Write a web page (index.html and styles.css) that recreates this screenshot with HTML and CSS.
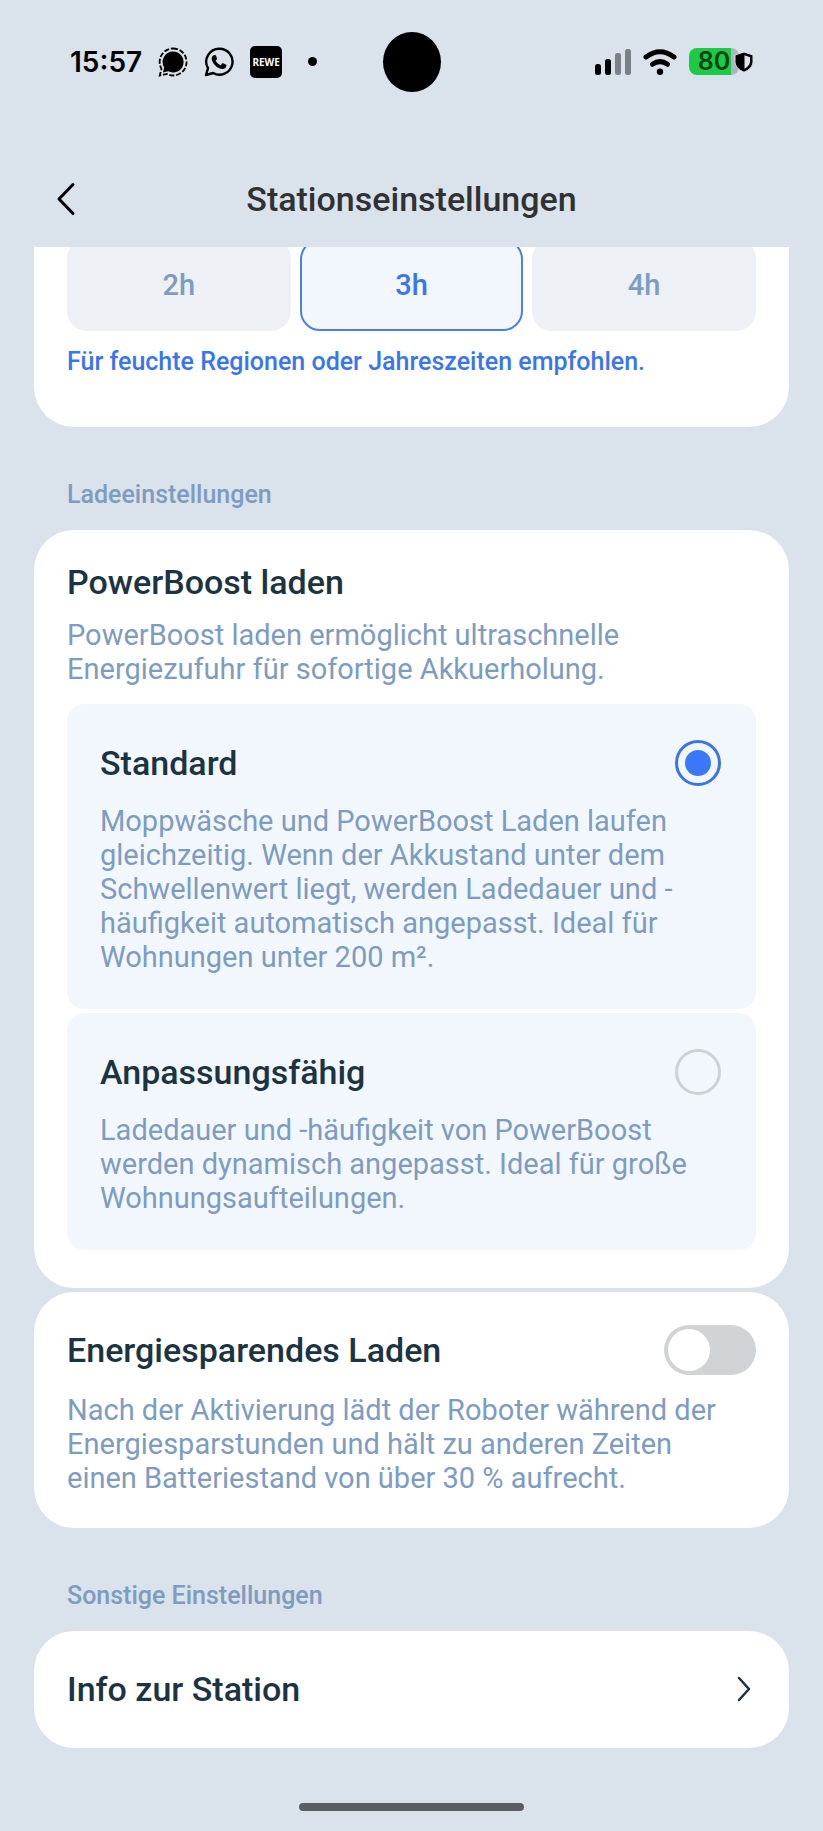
FILE: index.html
```html
<!DOCTYPE html>
<html lang="de">
<head>
    <meta charset="UTF-8">
    <meta name="viewport" content="width=device-width, initial-scale=1.0">
    <title>Stationseinstellungen</title>
    <link rel="stylesheet" href="styles.css">
</head>
<body>
    <div class="statusbar">
        <div class="status-left">
            <span class="clock">15:57</span>
            <svg class="icon-signal" width="30" height="30" viewBox="0 0 30 30">
                <path d="M15 4.500a10.500 10.500 0 1 1-4.800 19.800L5 25.500l1.200-5A10.500 10.500 0 0 1 15 4.500z" fill="#000"/>
                <path d="M15 1.500a13.500 13.500 0 1 1-6.300 25.400L1.800 28.500l1.700-6.600A13.500 13.500 0 0 1 15 1.500z" fill="none" stroke="#000" stroke-width="1.800" stroke-dasharray="5 1.800"/>
            </svg>
            <svg class="icon-whatsapp" width="30" height="30" viewBox="0 0 30 30">
                <path d="M15.500 1.700a13 13 0 1 1-6.400 24.300L2 28l2-6.800A13 13 0 0 1 15.500 1.700z" fill="none" stroke="#000" stroke-width="2.400" stroke-linejoin="round"/>
                <path d="M11 8c.6 0 .8.200 1 .7l1 2.500c.2.500 0 .9-.3 1.300l-1 1.200c1.200 2.200 2.800 3.600 5 4.500l1.300-1.600c.3-.4.700-.5 1.200-.3l2.700 1.300c.5.200.7.500.6 1-.2 2-1.700 3.400-3.900 3.400-5.200-.3-10.600-5.500-10.900-10.300C7.700 9.700 9 8 11 8z" fill="#000"/>
            </svg>
            <span class="icon-rewe">REWE</span>
            <span class="more-dot"></span>
        </div>
        <div class="camera"></div>
        <div class="status-right">
            <svg width="36" height="26" viewBox="0 0 36 26">
                <rect x="0" y="15" width="6" height="11" rx="2.500" fill="#000"/>
                <rect x="10" y="10" width="6" height="16" rx="2.500" fill="#000"/>
                <rect x="20" y="4" width="6" height="22" rx="2.500" fill="#7c7f86"/>
                <rect x="30" y="0" width="6" height="26" rx="2.500" fill="#7c7f86"/>
            </svg>
            <svg class="icon-wifi" width="34" height="26" viewBox="0 0 34 26">
                <path d="M3 8Q17-2.500 31 8" fill="none" stroke="#000" stroke-width="5" stroke-linecap="round"/>
                <path d="M9.500 15.300Q17 10 24.500 15.300" fill="none" stroke="#000" stroke-width="5" stroke-linecap="round"/>
                <circle cx="17" cy="22.800" r="3.200" fill="#000"/>
            </svg>
            <div class="battery">
                <span class="battery-level">80</span>
                <svg class="icon-shield" width="20" height="22" viewBox="0 0 20 22">
                    <path d="M10 1L19 4V10.500c0 4.700-3.700 8.600-9 10.700C4.700 19.100 1 15.200 1 10.500V4z" fill="#000" stroke="#dae2eb" stroke-width="1"/>
                    <path d="M10.500 4.300L16 6.200V10.500c0 3-2.200 5.600-5.500 7.200z" fill="#dae2eb"/>
                </svg>
            </div>
        </div>
    </div>

    <header class="header">
        <button class="back" type="button" aria-label="Zurück">
            <svg width="20" height="34" viewBox="0 0 20 34">
                <path d="M17 2.500L3 17l14 14.500" fill="none" stroke="#000" stroke-width="3" stroke-linecap="round" stroke-linejoin="round"/>
            </svg>
        </button>
        <h1>Stationseinstellungen</h1>
    </header>

    <main class="content">
        <section class="card card-drying">
            <div class="durations">
                <button class="duration" type="button">2h</button>
                <button class="duration active" type="button">3h</button>
                <button class="duration" type="button">4h</button>
            </div>
            <p class="hint">Für feuchte Regionen oder Jahreszeiten empfohlen.</p>
        </section>

        <h2 class="section-label">Ladeeinstellungen</h2>

        <section class="card card-boost">
            <h3 class="title">PowerBoost laden</h3>
            <p class="desc">PowerBoost laden ermöglicht ultraschnelle Energiezufuhr für sofortige Akkuerholung.</p>
            <div class="options">
                <div class="option">
                    <div class="row">
                        <label class="title" for="boost-standard">Standard</label>
                        <input class="radio" type="radio" name="boost" id="boost-standard" checked>
                    </div>
                    <p class="desc">Moppwäsche und PowerBoost Laden laufen gleichzeitig. Wenn der Akkustand unter dem Schwellenwert liegt, werden Ladedauer und -häufigkeit automatisch angepasst. Ideal für Wohnungen unter 200 m².</p>
                </div>
                <div class="option">
                    <div class="row">
                        <label class="title" for="boost-adaptive">Anpassungsfähig</label>
                        <input class="radio" type="radio" name="boost" id="boost-adaptive">
                    </div>
                    <p class="desc">Ladedauer und -häufigkeit von PowerBoost werden dynamisch angepasst. Ideal für große Wohnungsaufteilungen.</p>
                </div>
            </div>
        </section>

        <section class="card card-saving">
            <div class="row">
                <label class="title" for="saving">Energiesparendes Laden</label>
                <input class="toggle" type="checkbox" id="saving">
            </div>
            <p class="desc">Nach der Aktivierung lädt der Roboter während der Energiesparstunden und hält zu anderen Zeiten einen Batteriestand von über 30 % aufrecht.</p>
        </section>

        <h2 class="section-label">Sonstige Einstellungen</h2>

        <a class="card card-link" href="#">
            <span class="title">Info zur Station</span>
            <svg width="16" height="26" viewBox="0 0 16 26">
                <path d="M3 2l10 11L3 24" fill="none" stroke="#1c3342" stroke-width="2.500" stroke-linecap="round" stroke-linejoin="round"/>
            </svg>
        </a>
    </main>

    <div class="home-bar"></div>
</body>
</html>
```

FILE: styles.css
```css
* {
    box-sizing: border-box;
}

body {
    margin: 0;
    background: #dae2eb;
    color: #1c3342;
    font-family: Roboto, "Liberation Sans", sans-serif;
}

h1,
h2,
h3,
p {
    margin: 0;
}

button {
    padding: 0;
    border: 0;
    background: none;
    font-family: inherit;
}

svg {
    display: block;
    flex: none;
}

/* Status bar */
.statusbar {
    display: grid;
    grid-template-columns: 1fr auto 1fr;
    align-items: center;
    height: 150px;
    padding: 0 70px 27px;
    color: #000;
}

.status-left,
.status-right {
    display: flex;
    align-items: center;
}

.status-right {
    justify-content: flex-end;
}

.clock {
    font: 600 28px/34px Inter, sans-serif;
}

.icon-signal,
.icon-whatsapp {
    margin-left: 16px;
}

.icon-rewe {
    width: 32px;
    margin-left: 16px;
    border-radius: 5px;
    background: #000;
    color: #fff;
    font: 700 10px/32px "Noto Sans", sans-serif;
    text-align: center;
}

.more-dot {
    width: 9px;
    height: 9px;
    margin-left: 26px;
    border-radius: 50%;
    background: #000;
}

.camera {
    width: 58px;
    height: 60px;
    border-radius: 50%;
    background: #000;
}

.icon-wifi {
    margin-left: 12px;
}

.battery {
    position: relative;
    width: 64px;
    margin-left: 12px;
}

.battery-level {
    display: block;
    width: 50px;
    border-radius: 8px;
    background: linear-gradient(to right, #1bcb46 42px, #b0b5bd 42px);
    color: #04420f;
    font: 600 25px/27px Inter, sans-serif;
    text-align: center;
}

.icon-shield {
    position: absolute;
    top: 3px;
    right: -1px;
}

/* Header */
.header {
    display: grid;
    grid-template-columns: 40px 1fr 40px;
    align-items: center;
    height: 97px;
    padding: 0 46px;
}

.back {
    display: flex;
    justify-content: center;
}

.header h1 {
    color: #303133;
    font-size: 34px;
    font-weight: 500;
    line-height: 40px;
    text-align: center;
}

/* Settings list */
.content {
    overflow: hidden;
    padding: 0 34px;
}

.card {
    padding: 32px 33px;
    border-radius: 40px;
    background: #fff;
}

.section-label {
    margin: 53px 33px 20px;
    color: #7d9cc0;
    font-size: 25px;
    font-weight: 500;
    line-height: 30px;
}

.title {
    font-size: 34px;
    font-weight: 500;
    line-height: 40px;
}

.desc {
    margin-top: 16px;
    color: #7d9cc0;
    font-size: 29px;
    line-height: 34px;
}

.row {
    display: flex;
    align-items: center;
    justify-content: space-between;
}

.row + .desc {
    margin-top: 18px;
}

/* Partly scrolled under the header */
.card-drying {
    margin-top: -40px;
    padding-bottom: 50px;
}

.durations {
    display: grid;
    grid-template-columns: repeat(3, 1fr);
    gap: 9px;
}

.duration {
    height: 92px;
    border-radius: 20px;
    background: #edf0f5;
    color: #7d9cc0;
    font-size: 29px;
    font-weight: 500;
}

.duration.active {
    border: 2px solid #4a7fe4;
    background: #f2f7fe;
    color: #3a75ee;
}

.hint {
    margin-top: 16px;
    color: #3a75ee;
    font-size: 25px;
    font-weight: 500;
    line-height: 30px;
}

.card-boost {
    padding-bottom: 38px;
}

.options {
    display: grid;
    gap: 4px;
    margin-top: 18px;
}

.option {
    padding: 36px 33px 35px;
    border-radius: 17px;
    background: #f2f7fe;
}

.radio {
    appearance: none;
    display: grid;
    place-items: center;
    width: 46px;
    height: 46px;
    margin: 0 2px;
    border: 3px solid #ced2d5;
    border-radius: 50%;
}

.radio:checked {
    border-color: #3b73e8;
}

.radio:checked::before {
    content: "";
    width: 26px;
    height: 26px;
    border-radius: 50%;
    background: #3a78f8;
}

.card-saving {
    margin-top: 4px;
    padding-top: 33px;
    padding-bottom: 33px;
}

.card-saving .desc {
    padding-right: 20px;
}

.toggle {
    appearance: none;
    width: 92px;
    height: 50px;
    margin: 0;
    padding: 4px;
    border-radius: 25px;
    background: #d0d4d7;
}

.toggle::before {
    content: "";
    display: block;
    width: 42px;
    height: 42px;
    border-radius: 50%;
    background: #fff;
}

.toggle:checked {
    background: #3a78f8;
}

.toggle:checked::before {
    margin-left: auto;
}

.card-link {
    display: flex;
    align-items: center;
    justify-content: space-between;
    padding: 38px 37px 39px 33px;
    color: inherit;
    text-decoration: none;
}

.home-bar {
    width: 225px;
    height: 8px;
    margin: 55px auto 20px;
    border-radius: 4px;
    background: #5a5e61;
}
```
